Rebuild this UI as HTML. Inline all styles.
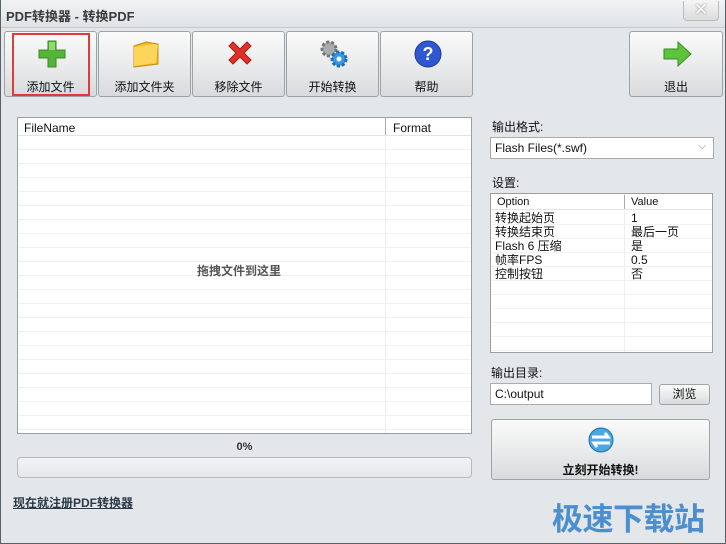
<!DOCTYPE html>
<html><head><meta charset="utf-8"><style>
*{box-sizing:border-box;margin:0;padding:0}
body{width:726px;height:544px;background:#e3e7e9;font-family:"Liberation Sans","Noto Sans CJK SC",sans-serif;font-size:12px;color:#111;position:relative;overflow:hidden}
.a{position:absolute}
.win{left:0;top:0;width:726px;height:544px;border:1px solid #56616a;border-top:none}
.title{left:1px;top:0;width:724px;height:28px;background:linear-gradient(#f1f3f4,#dfe3e5);border-bottom:1px solid #c4c9cc}
.btn{border:1px solid #9ea3a6;border-radius:3px;background:linear-gradient(#fafafa,#e9eaeb 55%,#d8dadb);text-align:center}
.tb{top:31px;height:66px;width:93px}
.tb span{position:absolute;left:0;right:0;top:46px;font-size:12px}
.tb svg{position:absolute;left:31px;top:6px}
.box{background:#fff;border:1px solid #9a9fa3}
.lines{background:repeating-linear-gradient(#fff 0 13px,#f1f2f4 13px 14px)}
</style></head><body>
<div class="a win"></div>
<div class="a title"><div class="a" style="left:5px;top:6px;font-size:13px;font-weight:bold;color:#3a3a3a">PDF转换器 - 转换PDF</div></div>
<div class="a" style="left:683px;top:1px;width:36px;height:20px;border:1px solid #b7bcbf;border-top:none;border-radius:0 0 4px 4px;background:linear-gradient(#f4f4f4,#dcdcdc);color:#fff;font-size:17px;text-align:center;line-height:18px;text-shadow:0 0 2px #777">✕</div>

<div class="a btn tb" style="left:4px"><svg width="32" height="32" viewBox="0 0 32 32"><path d="M12 3h8v9h9v8h-9v9h-8v-9H3v-8h9z" fill="#55b43a" stroke="#3a8a25"/><path d="M13 4h6v8h-6z" fill="#8fdc6e"/></svg><span>添加文件</span></div>
<div class="a" style="left:12px;top:33px;width:78px;height:63px;border:2px solid #e03a3a"></div>
<div class="a btn tb" style="left:98px"><svg width="32" height="32" viewBox="0 0 32 32"><path d="M4 8l12-4 12 2v20l-24 3z" fill="#f5b820" stroke="#c98a10"/><path d="M4 9l20-3 4 1-2 18-22 3z" fill="#fcd65a"/></svg><span>添加文件夹</span></div>
<div class="a btn tb" style="left:192px"><svg width="32" height="32" viewBox="0 0 32 32"><path d="M5 8l4-4 7 7 7-7 4 4-7 7 7 7-4 4-7-7-7 7-4-4 7-7z" fill="#e0322b" stroke="#a81c17"/></svg><span>移除文件</span></div>
<div class="a btn tb" style="left:286px"><svg width="32" height="32" viewBox="0 0 32 32"><circle cx="11" cy="11" r="7" fill="#a8acaf" stroke="#777" stroke-width="3" stroke-dasharray="3 2"/><circle cx="21" cy="21" r="7" fill="#3a9ae0" stroke="#1d70b8" stroke-width="3" stroke-dasharray="3 2"/><circle cx="21" cy="21" r="2.5" fill="#fff"/></svg><span>开始转换</span></div>
<div class="a btn tb" style="left:380px"><svg width="32" height="32" viewBox="0 0 32 32"><circle cx="16" cy="16" r="13" fill="#2f57d0" stroke="#1a3a9a"/><text x="16" y="22" font-size="18" font-weight="bold" fill="#fff" text-anchor="middle" font-family="Liberation Sans">?</text></svg><span>帮助</span></div>
<div class="a btn tb" style="left:629px;width:94px"><svg width="32" height="32" viewBox="0 0 32 32"><path d="M3 11h14V4l13 12-13 12v-7H3z" fill="#5cc43c" stroke="#3a8a25"/></svg><span>退出</span></div>

<div class="a box" style="left:17px;top:117px;width:455px;height:317px"></div>
<div class="a lines" style="left:18px;top:136px;width:453px;height:297px"></div>
<div class="a" style="left:18px;top:118px;width:453px;height:18px;background:#fff;border-bottom:1px solid #e2e4e6"></div>
<div class="a" style="left:24px;top:121px">FileName</div>
<div class="a" style="left:385px;top:118px;width:1px;height:315px;background:#eceef0"></div>
<div class="a" style="left:385px;top:118px;width:1px;height:17px;background:#aaa"></div>
<div class="a" style="left:393px;top:121px">Format</div>
<div class="a" style="left:18px;top:262px;width:442px;text-align:center;color:#555;font-weight:bold">拖拽文件到这里</div>
<div class="a" style="left:17px;top:441px;width:455px;text-align:center;font-size:11px;font-weight:bold;color:#333">0%</div>
<div class="a" style="left:17px;top:457px;width:455px;height:21px;border:1px solid #b5b9bc;border-radius:4px;background:linear-gradient(#f2f3f4,#e5e7e8)"></div>
<div class="a" style="left:13px;top:494px;font-weight:bold;text-decoration:underline;color:#2a3a48">现在就注册PDF转换器</div>

<div class="a" style="left:492px;top:118px">输出格式:</div>
<div class="a box" style="left:490px;top:137px;width:224px;height:22px;border-color:#a8acaf"><div class="a" style="left:4px;top:3px">Flash Files(*.swf)</div><div class="a" style="left:207px;top:2px;color:#888;font-size:11px">⌵</div></div>
<div class="a" style="left:492px;top:174px">设置:</div>
<div class="a box" style="left:490px;top:193px;width:223px;height:160px"></div>
<div class="a lines" style="left:491px;top:211px;width:221px;height:141px"></div>
<div class="a" style="left:491px;top:194px;width:221px;height:16px;background:#fff;border-bottom:1px solid #e2e4e6"></div>
<div class="a" style="left:624px;top:194px;width:1px;height:158px;background:#eceef0"></div>
<div class="a" style="left:624px;top:195px;width:1px;height:14px;background:#aaa"></div>
<div class="a" style="left:497px;top:196px;font-size:11px">Option</div>
<div class="a" style="left:631px;top:196px;font-size:11px">Value</div>
<div class="a" style="left:495px;top:211px;line-height:14px;font-size:12px">转换起始页<br>转换结束页<br>Flash 6 压缩<br>帧率FPS<br>控制按钮</div>
<div class="a" style="left:631px;top:211px;line-height:14px;font-size:12px">1<br>最后一页<br>是<br>0.5<br>否</div>

<div class="a" style="left:491px;top:364px">输出目录:</div>
<div class="a box" style="left:490px;top:383px;width:162px;height:22px;border-color:#a8acaf"><div class="a" style="left:4px;top:3px">C:\output</div></div>
<div class="a btn" style="left:659px;top:384px;width:51px;height:21px;line-height:19px">浏览</div>
<div class="a btn" style="left:491px;top:419px;width:219px;height:61px"><svg class="a" style="left:94px;top:5px" width="30" height="30" viewBox="0 0 30 30"><circle cx="15" cy="15" r="12" fill="#4aa8e0" stroke="#1d6fb0"/><path d="M6 12h16l-3-4M24 18H8l3 4" stroke="#fff" stroke-width="3" fill="none"/></svg><div class="a" style="left:0;right:0;top:41px;font-weight:bold">立刻开始转换!</div></div>
<div class="a" style="left:552px;top:494px;font-size:31px;font-weight:bold;color:#4c8ed0;letter-spacing:-0.5px">极速下载站</div>
</body></html>
